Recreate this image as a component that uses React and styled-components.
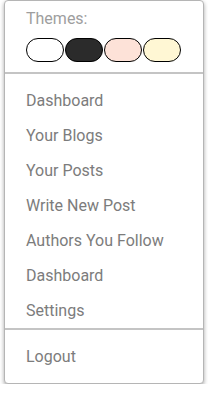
import styled, { createGlobalStyle } from "styled-components";

const GlobalStyle = createGlobalStyle`
  body {
    margin: 0;
    background: #ffffff;
    font-family: Roboto, "Liberation Sans", sans-serif;
  }
`;

const Menu = styled.nav`
  box-sizing: border-box;
  width: 200px;
  margin: 0 0 0 4px;
  background: #ffffff;
  border: 1px solid #b5b5b5;
  border-radius: 4px;
  box-shadow: 0 2px 4px rgba(0, 0, 0, 0.35);
`;

const ThemeSection = styled.div`
  padding: 8px 0 10px 21px;
`;

const ThemeLabel = styled.div`
  font-size: 16px;
  line-height: 19px;
  color: #9e9e9e;
`;

const Swatches = styled.div`
  display: flex;
  gap: 1px;
  margin-top: 10px;
`;

const Swatch = styled.button`
  box-sizing: border-box;
  width: 38px;
  height: 24px;
  padding: 0;
  border: 1px solid #000000;
  border-radius: 12px;
  background: ${(p) => p.$color};
  cursor: pointer;
`;

const Divider = styled.hr`
  margin: 0;
  border: none;
  height: 2px;
  background: #c4c4c4;
`;

const List = styled.ul`
  list-style: none;
  margin: 0;
  padding: ${(p) => p.$padding};
`;

const Item = styled.li`
  height: 35px;
  display: flex;
  align-items: center;
  padding-left: 21px;
  font-size: 16px;
  color: #7c7c7c;
  cursor: pointer;
`;

const themes = ["#ffffff", "#2b2b2b", "#fde2d8", "#fff7d4"];
const links = [
  "Dashboard",
  "Your Blogs",
  "Your Posts",
  "Write New Post",
  "Authors You Follow",
  "Dashboard",
  "Settings",
];

const App = () => {
  return (
    <>
      <GlobalStyle />
      <Menu>
        <ThemeSection>
          <ThemeLabel>Themes:</ThemeLabel>
          <Swatches>
            {themes.map((c) => (
              <Swatch key={c} $color={c} aria-label={c} />
            ))}
          </Swatches>
        </ThemeSection>
        <Divider />
        <List $padding="9px 0 0">
          {links.map((l, i) => (
            <Item key={i}>{l}</Item>
          ))}
        </List>
        <Divider />
        <List $padding="9px 0 9px">
          <Item>Logout</Item>
        </List>
      </Menu>
    </>
  );
};

export default App;
